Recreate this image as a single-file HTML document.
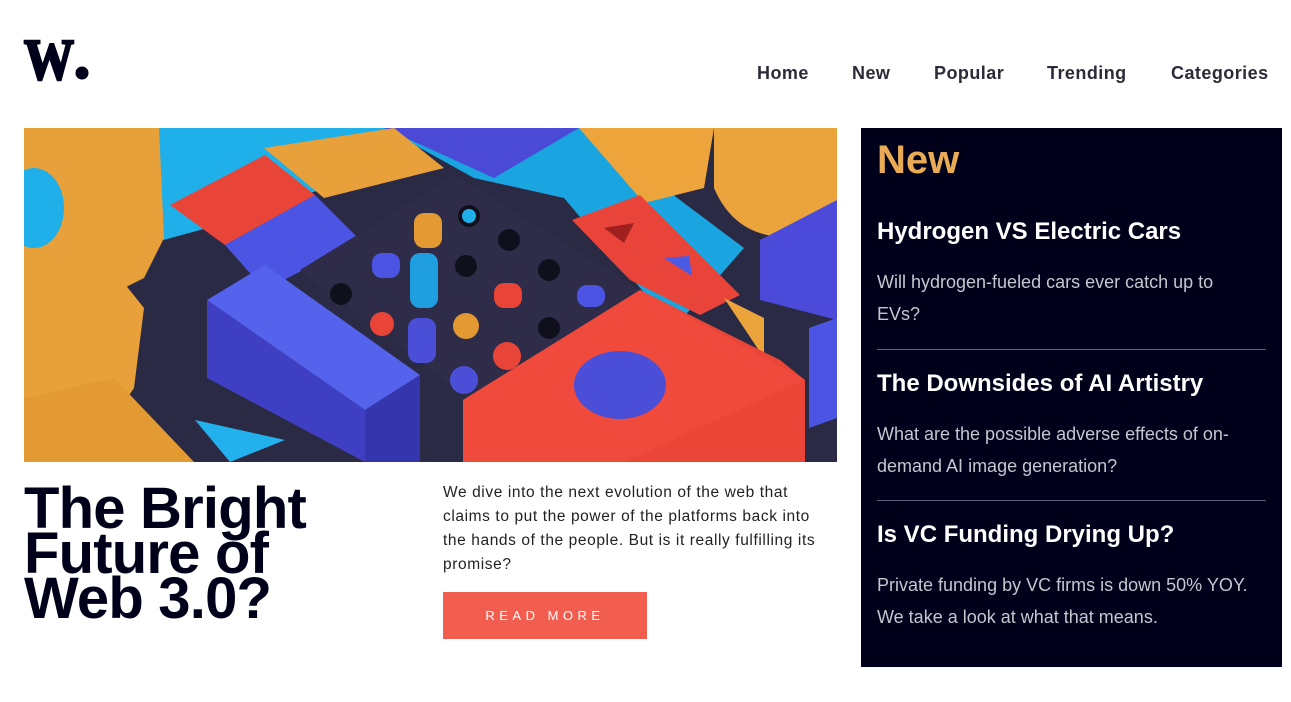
<!DOCTYPE html>
<html><head><meta charset="utf-8"><style>
*{margin:0;padding:0;box-sizing:border-box}
body{width:1291px;height:702px;background:#fff;font-family:"Liberation Sans",sans-serif;position:relative;overflow:hidden}
.nav a{position:absolute;top:63px;font-size:18px;font-weight:bold;color:#2b2c38;text-decoration:none;letter-spacing:0.45px}
h1{position:absolute;left:24px;top:486px;font-size:58px;line-height:45px;font-weight:bold;color:#00001a;letter-spacing:-0.8px;width:330px}
.p{position:absolute;left:443px;top:481px;width:420px;font-size:15.5px;line-height:24px;color:#222;letter-spacing:0.6px}
.btn{position:absolute;left:443px;top:592px;width:204px;height:47px;background:#f15e50;color:#fff;font-size:13px;letter-spacing:4.5px;text-align:center;line-height:47px}
.side{position:absolute;left:861px;top:128px;width:421px;height:539px;background:#00001a;padding:0 16px}
.side .new{position:absolute;left:16px;top:10px;font-size:40px;font-weight:bold;color:#e9ab53}
.item{position:absolute;left:16px;width:390px}
.item h3{font-size:24px;color:#fff;font-weight:bold;line-height:28px}
.item p{font-size:18px;line-height:32px;color:#c5c6ce;margin-top:20px}
.hr{position:absolute;left:16px;width:389px;height:1px;background:#5d5f79}
</style></head><body>
<svg style="position:absolute;left:22px;top:30px" width="80" height="60"><text x="2" y="49" font-family="Liberation Serif" font-weight="bold" font-size="58" textLength="50" lengthAdjust="spacingAndGlyphs" fill="#00001a" stroke="#00001a" stroke-width="2.5">W</text><circle cx="60" cy="43" r="6.5" fill="#00001a"/></svg>
<div class="nav"><a style="left:757px">Home</a><a style="left:852px">New</a><a style="left:934px">Popular</a><a style="left:1047px">Trending</a><a style="left:1171px">Categories</a></div>
<svg style="position:absolute;left:24px;top:128px" width="813" height="334" viewBox="0 0 813 334">
<rect width="813" height="334" fill="#2b2a45"/>
<polygon points="70,0 370,0 300,60 220,90 110,120 70,60" fill="#1fb0ea"/>
<polygon points="360,0 560,0 720,120 650,200 540,70 450,50" fill="#1aa5e0"/>
<polygon points="360,0 555,0 470,50" fill="#4a4ad6"/>
<polygon points="240,20 370,0 420,40 300,70" fill="#e8a13a"/>
<polygon points="0,0 135,0 140,110 120,150 60,180 0,210" fill="#e8a13a"/>
<ellipse cx="10" cy="80" rx="30" ry="40" fill="#1fb0ea"/>
<polygon points="0,140 80,130 120,180 110,260 60,334 0,334" fill="#e8a13a"/>
<polygon points="0,270 90,250 170,334 0,334" fill="#e39a32"/>
<polygon points="146,77 241,27 291,67 201,117" fill="#e84538"/>
<polygon points="201,117 291,67 336,112 241,162" fill="#4c55e3"/>
<polygon points="276,142 431,47 616,162 446,272" fill="#2e2c48"/>
<polygon points="555,0 690,0 680,60 620,75" fill="#eda43a"/>
<path d="M690,0 L813,0 L813,100 Q720,130 690,60 Z" fill="#eaa43b"/>
<polygon points="736,112 813,72 813,192 736,172" fill="#4c4ad8"/>
<polygon points="548,92 616,67 716,167 676,187 606,152" fill="#e8443a"/>
<polygon points="580,100 610,95 600,115" fill="#a02020"/>
<polygon points="640,130 665,128 668,148" fill="#4c5ae5"/>
<polygon points="700,170 740,190 740,230" fill="#eaa43b"/>
<polygon points="183,172 241,137 396,247 341,282" fill="#5562ec"/>
<polygon points="183,172 341,282 341,334 183,250" fill="#3f3fc4"/>
<polygon points="341,282 396,247 396,334 341,334" fill="#3535ad"/>
<polygon points="439,272 616,162 756,232 781,252 781,334 439,334" fill="#ea4536"/>
<polygon points="439,272 616,162 781,252 600,334 439,334" fill="#ef4a3b"/>
<ellipse cx="596" cy="257" rx="46" ry="34" fill="#4b4fd8"/>
<polygon points="785,200 813,190 813,290 785,300" fill="#4c55e3"/>
<polygon points="171,292 261,312 206,334" fill="#23b1ee"/>
<g fill="#10101c"><circle cx="445" cy="88" r="11"/><circle cx="485" cy="112" r="11"/><circle cx="442" cy="138" r="11"/><circle cx="525" cy="142" r="11"/><circle cx="317" cy="166" r="11"/><circle cx="525" cy="200" r="11"/></g>
<circle cx="445" cy="88" r="7" fill="#1fb0ea"/>
<rect x="390" y="85" width="28" height="35" rx="10" fill="#e39a32"/>
<rect x="386" y="125" width="28" height="55" rx="10" fill="#1f9fe0"/>
<rect x="348" y="125" width="28" height="25" rx="10" fill="#4c55e3"/>
<circle cx="358" cy="196" r="12" fill="#e84538"/>
<rect x="384" y="190" width="28" height="45" rx="10" fill="#4b4fd8"/>
<circle cx="442" cy="198" r="13" fill="#e39a32"/>
<rect x="470" y="155" width="28" height="25" rx="10" fill="#e84538"/>
<rect x="553" y="157" width="28" height="22" rx="10" fill="#4c55e3"/>
<circle cx="483" cy="228" r="14" fill="#e84538"/>
<circle cx="440" cy="252" r="14" fill="#4b4fd8"/>
</svg>
<h1>The Bright Future of Web 3.0?</h1>
<div class="p">We dive into the next evolution of the web that<br>claims to put the power of the platforms back into<br>the hands of the people. But is it really fulfilling its<br>promise?</div>
<div class="btn">READ MORE</div>
<div class="side">
<div class="new">New</div>
<div class="item" style="top:90px"><h3>Hydrogen VS Electric Cars</h3><p>Will hydrogen-fueled cars ever catch up to<br>EVs?</p></div>
<div class="hr" style="top:221px"></div>
<div class="item" style="top:242px"><h3>The Downsides of AI Artistry</h3><p>What are the possible adverse effects of on-<br>demand AI image generation?</p></div>
<div class="hr" style="top:372px"></div>
<div class="item" style="top:393px"><h3>Is VC Funding Drying Up?</h3><p>Private funding by VC firms is down 50% YOY.<br>We take a look at what that means.</p></div>
</div>
</body></html>
